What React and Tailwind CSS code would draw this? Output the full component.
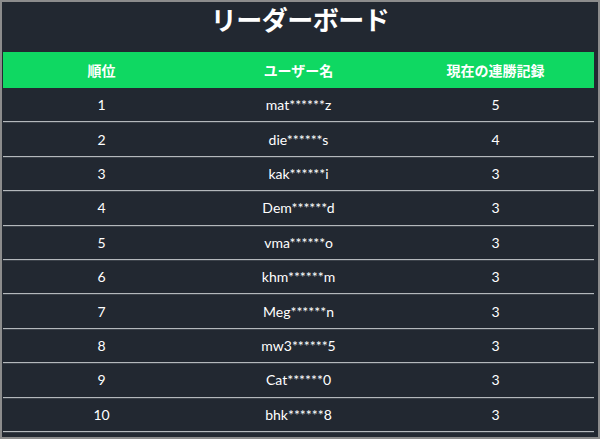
import React from "react";

const rows = [
  ["1", "mat******z", "5"],
  ["2", "die******s", "4"],
  ["3", "kak******i", "3"],
  ["4", "Dem******d", "3"],
  ["5", "vma******o", "3"],
  ["6", "khm******m", "3"],
  ["7", "Meg******n", "3"],
  ["8", "mw3******5", "3"],
  ["9", "Cat******0", "3"],
  ["10", "bhk******8", "3"],
];

export default function App() {
  return (
    <div
      className="w-[600px] h-[439px] border-2 border-[#8c8c8c] bg-[#222831] text-white overflow-hidden"
      style={{ fontFamily: "Lato, 'Noto Sans CJK JP', sans-serif" }}
    >
      <div className="h-[50px] text-center text-[26px] font-bold leading-[36px] tracking-[-0.5px]">
        リーダーボード
      </div>
      <div className="pl-px pr-1">
        <div className="grid grid-cols-3 h-[36px] items-center bg-[#0fd862] text-[14px] font-bold text-center">
          <div>順位</div>
          <div>ユーザー名</div>
          <div>現在の連勝記録</div>
        </div>
        {rows.map((r) => (
          <div
            key={r[0]}
            className="grid grid-cols-3 h-[34.4px] items-center text-[14px] text-center border-b border-[#b4b8bc] shadow-[0_1px_0_#3c424a]"
          >
            <div>{r[0]}</div>
            <div>{r[1]}</div>
            <div>{r[2]}</div>
          </div>
        ))}
      </div>
    </div>
  );
}
